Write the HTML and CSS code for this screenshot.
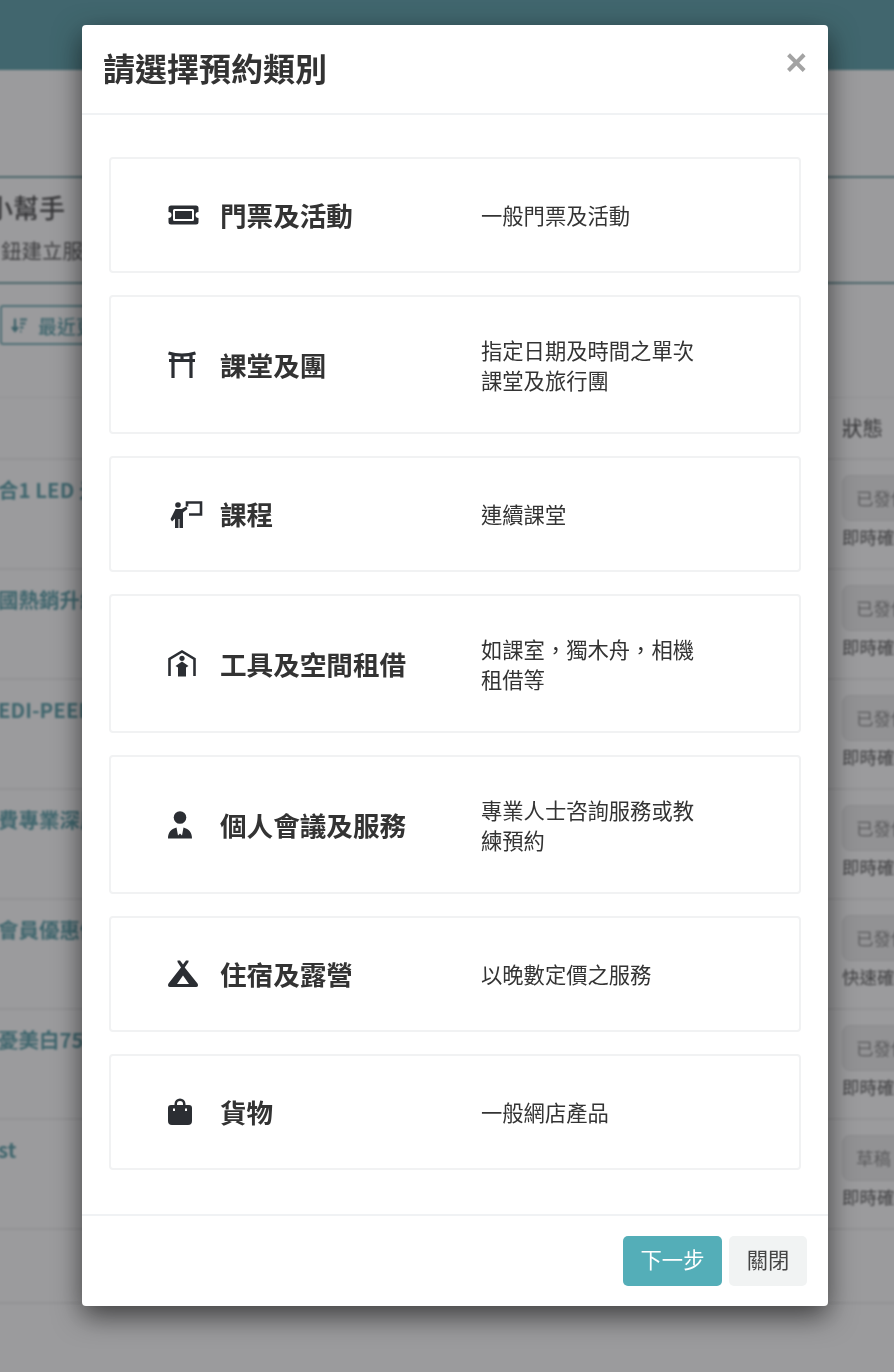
FILE: index.html
```html
<!DOCTYPE html>
<html lang="zh-Hant">
<head>
<meta charset="utf-8">
<title>請選擇預約類別</title>
<link rel="stylesheet" href="styles.css">
</head>
<body>
<div class="page">
  <header class="topbar"></header>
  <section class="helper">
    <h2 class="helper-title">小幫手</h2>
    <p class="helper-text">鈕建立服務</p>
  </section>
  <div class="toolbar">
    <button class="sort-btn">
      <svg class="sort-icon" viewBox="0 0 16 16"><path class="sort-stroke" d="M4 1v12M1 9.500l3 4 3-4M9 2h7M9 6h5.500M9 10h3.500M9 14h1.500"/></svg>
      最近更新
    </button>
  </div>
  <div class="table">
    <div class="thead"><span></span><span class="th-status">狀態</span></div>
    <div class="row"><a class="name">合1 LED 光</a><div class="status"><span class="badge">已發佈</span><span class="mode">即時確認</span></div></div>
    <div class="row"><a class="name">國熱銷升級</a><div class="status"><span class="badge">已發佈</span><span class="mode">即時確認</span></div></div>
    <div class="row"><a class="name">EDI-PEEL</a><div class="status"><span class="badge">已發佈</span><span class="mode">即時確認</span></div></div>
    <div class="row"><a class="name">費專業深層</a><div class="status"><span class="badge">已發佈</span><span class="mode">即時確認</span></div></div>
    <div class="row"><a class="name">會員優惠價</a><div class="status"><span class="badge">已發佈</span><span class="mode">快速確認</span></div></div>
    <div class="row"><a class="name">憂美白75折</a><div class="status"><span class="badge">已發佈</span><span class="mode">即時確認</span></div></div>
    <div class="row"><a class="name">st</a><div class="status"><span class="badge">草稿</span><span class="mode">即時確認</span></div></div>
    <div class="row row-empty"></div>
  </div>
</div>

<div class="overlay">
  <div class="modal">
    <div class="modal-head">
      <h1 class="modal-title">請選擇預約類別</h1>
      <span class="close">×</span>
    </div>
    <div class="modal-body">
      <div class="card">
        <svg class="icon" viewBox="0 0 32 28"><path class="solid" fill-rule="evenodd" d="M3 4.500h25a2.500 2.500 0 0 1 2.500 2.500v4a3 3 0 0 0 0 6v4a2.500 2.500 0 0 1-2.500 2.500H3A2.500 2.500 0 0 1 .5 21v-4a3 3 0 0 0 0-6V7A2.500 2.500 0 0 1 3 4.500zm3.500 3.500a1.500 1.500 0 0 0-1.500 1.500v9A1.500 1.500 0 0 0 6.500 20h18a1.500 1.500 0 0 0 1.500-1.500v-9A1.500 1.500 0 0 0 24.500 8z"/><rect class="solid" x="7" y="10" width="17" height="8"/></svg>
        <div class="card-title">門票及活動</div>
        <div class="card-desc">一般門票及活動</div>
      </div>
      <div class="card card-tall">
        <svg class="icon" viewBox="0 0 32 28"><path class="line" d="M.5 2c8 2.500 19 2.500 27 0M1 9.500h26M5 4v23M23 4v23M14 5v4"/></svg>
        <div class="card-title">課堂及團</div>
        <div class="card-desc">指定日期及時間之單次<br>課堂及旅行團</div>
      </div>
      <div class="card">
        <svg class="icon icon-wide" viewBox="0 0 32 28"><circle class="solid" cx="10" cy="5" r="2.800"/><path class="solid" d="M7.500 9h6l5-2.500 1 2.500-4.500 3.500V28h-3.500v-9H10.500v9H7v-9.500l-3 3L2.500 19z"/><path class="line-thin" d="M19 6.500V2.500h14v12H21"/></svg>
        <div class="card-title">課程</div>
        <div class="card-desc">連續課堂</div>
      </div>
      <div class="card card-tall">
        <svg class="icon" viewBox="0 0 32 28"><path class="line-thin" d="M1.500 26V9L14 1.500 26.500 9v17"/><circle class="solid" cx="14" cy="8.300" r="2.600"/><path class="solid" d="M7.500 16l6.500-4.500 6.500 4.500-2.500 1.500V26.500h-8V17.500z"/></svg>
        <div class="card-title">工具及空間租借</div>
        <div class="card-desc">如課室，獨木舟，相機<br>租借等</div>
      </div>
      <div class="card card-tall">
        <svg class="icon" viewBox="0 0 32 28"><circle class="solid" cx="12" cy="6.500" r="6.300"/><path class="solid" d="M0 27.500c0-6 3-9.500 8.500-11l1.500 8 2-2 2 2 1.500-8c5.500 1.500 8.500 5 8.500 11z"/></svg>
        <div class="card-title">個人會議及服務</div>
        <div class="card-desc">專業人士咨詢服務或教<br>練預約</div>
      </div>
      <div class="card">
        <svg class="icon" viewBox="0 0 32 28"><path class="solid" fill-rule="evenodd" d="M9.500.5h2.500l3 4 3-4h2.500v1.500l-3.800 5.500L29.500 23.500c1 1.800.5 3.500-1.500 3.500H2c-2 0-2.500-1.700-1.500-3.500L13 7.500 9.500 2zM15 15.500L9 24h12z"/></svg>
        <div class="card-title">住宿及露營</div>
        <div class="card-desc">以晚數定價之服務</div>
      </div>
      <div class="card">
        <svg class="icon" viewBox="0 0 32 28"><path class="solid" fill-rule="evenodd" d="M6.500 7V6a5.500 5.500 0 0 1 11 0v1H21a3 3 0 0 1 3 3v13a4 4 0 0 1-4 4H4a4 4 0 0 1-4-4V10a3 3 0 0 1 3-3zm2.500 0h6V6a3 3 0 0 0-6 0zM5 10.500v2.500h2v-2.500zm12 0v2.500h2v-2.500z"/></svg>
        <div class="card-title">貨物</div>
        <div class="card-desc">一般網店產品</div>
      </div>
    </div>
    <div class="modal-foot">
      <button class="btn btn-next">下一步</button>
      <button class="btn btn-close">關閉</button>
    </div>
  </div>
</div>
</body>
</html>
```

FILE: styles.css
```css
* { box-sizing: border-box; }
html, body { margin: 0; padding: 0; height: 100%; overflow: hidden; }
body {
  font-family: "Noto Sans CJK TC", "Liberation Sans", sans-serif;
  background: #fff;
  color: #333;
}
.page { width: 910px; height: 1390px; margin: -8px 0 0 -8px; overflow: hidden; filter: blur(1px); background: #fff; }
.topbar { height: 78px; background: #559ca6; }
.helper {
  margin-top: 106px;
  height: 108px;
  padding: 11px 0 0 8px;
  border-top: 2px solid #6f9ea3;
  border-bottom: 2px solid #6f9ea3;
  overflow: hidden;
}
.helper-title { margin: 0 0 0 -13px; font-size: 26px; line-height: 36px; font-weight: 500; color: #444; white-space: nowrap; }
.helper-text { margin: 11px 0 0 1px; font-size: 20.500px; line-height: 28px; color: #555; white-space: nowrap; }
.toolbar { padding: 21px 0 0 8px; height: 84px; }
.sort-btn {
  display: flex; align-items: center; gap: 11px;
  width: 110px; height: 40px; padding: 0 0 0 9px;
  font: 500 19px "Noto Sans CJK TC", sans-serif; color: #559ca6;
  background: transparent; border: 2px solid #71adb4; border-radius: 3px; white-space: nowrap; overflow: hidden;
}
.sort-icon { width: 16px; height: 19px; flex: none; }
.sort-stroke { fill: none; stroke: #4c919b; stroke-width: 2.200; }
.table { border-top: 1px solid #eee; margin-top: 29px; }
.thead, .row { display: grid; grid-template-columns: 1fr 52px; padding: 0 8px; }
.thead { height: 62px; border-bottom: 2px solid #eee; }
.th-status { font-size: 20.500px; line-height: 58px; white-space: nowrap; color: #444; }
.row { height: 110px; border-bottom: 2px solid #eee; }
.row-empty { height: 74px; }
.name { margin-left: -2px; font-size: 20.500px; line-height: 28px; font-weight: 700; color: #559ca6; padding-top: 15px; white-space: nowrap; overflow: hidden; }
.status { display: flex; flex-direction: column; width: 100px; }
.badge {
  margin-top: 15px; width: 90px; height: 46px; padding-left: 13px;
  background: #eee; border: 1px solid #e2e2e2; border-radius: 8px;
  font-size: 17.500px; line-height: 44px; color: #888; white-space: nowrap;
}
.mode { margin-top: 3px; font-size: 17.500px; line-height: 26px; color: #555; white-space: nowrap; }

.overlay {
  position: fixed; inset: 0;
  display: flex; align-items: flex-start;
  padding: 25px 66px 0 82px;
  background: rgba(42, 42, 46, .47);
}
.modal {
  flex: 1;
  height: 1281px;
  display: flex; flex-direction: column;
  background: #fff;
  border-radius: 4px;
  box-shadow: 0 10px 28px rgba(0, 0, 0, .6);
  filter: blur(.6px);
}
.modal-head {
  height: 90px;
  flex: none;
  display: flex; justify-content: space-between; align-items: flex-start;
  padding: 0 21px 0 21px;
  border-bottom: 2px solid #f0f2f4;
}
.modal-title { margin: 19px 0 0; font-size: 32px; line-height: 46px; font-weight: 700; color: #333; white-space: nowrap; }
.close { font: 700 37px/36px "Liberation Sans", sans-serif; color: #a3a3a3; margin-top: 20px; }
.modal-body {
  flex: 1;
  display: flex; flex-direction: column; gap: 22px;
  padding: 42px 27px 0 27px;
}
.card {
  display: flex; align-items: center;
  height: 116px;
  padding-left: 57px;
  border: 2px solid #f1f2f3;
  border-radius: 4px;
}
.card-tall { height: 139px; }
.icon { width: 32px; height: 28px; flex: none; overflow: visible; }
.solid { fill: #2b2e33; stroke: none; }
.line { fill: none; stroke: #2b2e33; stroke-width: 3.200; }
.line-thin { fill: none; stroke: #2b2e33; stroke-width: 2.600; }
.card-title {
  width: 261px; margin-left: 20px; flex: none;
  font-size: 26.600px; line-height: 38px; font-weight: 700; color: #333; white-space: nowrap;
}
.card-desc { font-size: 21.300px; line-height: 30px; color: #333; white-space: nowrap; }
.modal-foot {
  flex: none; height: 92px;
  display: flex; justify-content: flex-end; align-items: flex-start; gap: 7px;
  padding: 20px 21px 0 0;
  border-top: 2px solid #f0f2f4;
}
.btn {
  height: 50px; padding: 0 0 5px; border: 0; border-radius: 5px;
  font: 400 21.300px "Noto Sans CJK TC", sans-serif;
}
.btn-next { width: 99px; background: #54aeb8; color: #fff; }
.btn-close { width: 78px; background: #f1f3f3; color: #444; }
```
